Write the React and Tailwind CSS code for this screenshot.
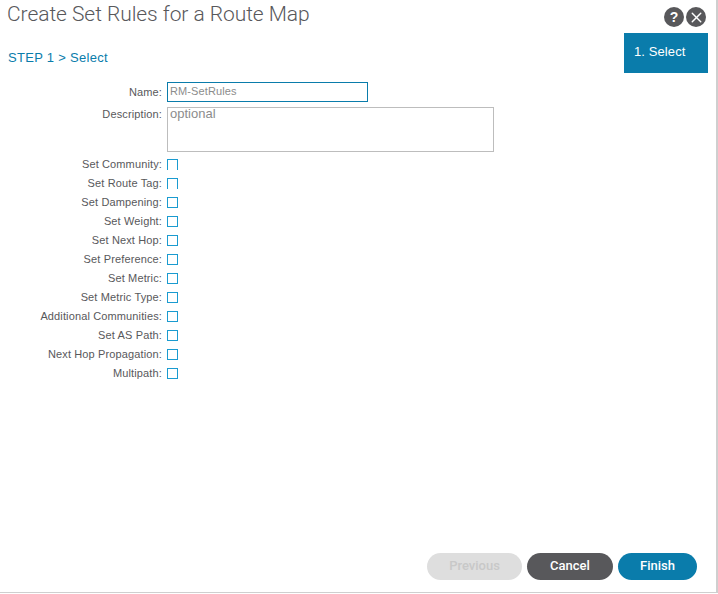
import { X } from "lucide-react";

const checks = [
  { label: "Set Community:", open: true },
  { label: "Set Route Tag:", open: true },
  { label: "Set Dampening:" },
  { label: "Set Weight:" },
  { label: "Set Next Hop:" },
  { label: "Set Preference:" },
  { label: "Set Metric:" },
  { label: "Set Metric Type:" },
  { label: "Additional Communities:" },
  { label: "Set AS Path:" },
  { label: "Next Hop Propagation:" },
  { label: "Multipath:" },
];

function CheckRow({ label, open }) {
  return (
    <div className="flex h-[19px] items-center">
      <span className="w-[162px] text-right text-[11px] tracking-[0.13px] text-[#58585b]">{label}</span>
      <span
        className={
          open
            ? "mt-[-1px] ml-[5px] h-[11px] w-[11px] border border-b-0 border-[#1a9bd0] bg-white"
            : "mt-[-1px] ml-[5px] h-[11px] w-[11px] border border-[#1a9bd0] bg-white"
        }
      />
    </div>
  );
}

export default function App() {
  return (
    <div className="flex h-[594px] w-[718px] flex-col bg-white font-['Liberation_Sans',sans-serif]">
      <div className="flex h-[593px] w-[718px] flex-col border-r-2 border-b border-[#cfcfcf]">
        <div className="flex">
          <div className="flex-1">
            <h1 className="mt-[1px] ml-[7px] font-['Roboto',sans-serif] text-[21px] leading-[26px] font-light tracking-[-0.06px] text-[#58585b]">
              Create Set Rules for a Route Map
            </h1>
            <div className="mt-[22px] ml-[8px] text-[13px] leading-[18px] tracking-[0.3px] text-[#0a7cab]">
              STEP 1 &gt; Select
            </div>
          </div>
          <div className="mr-[8px] flex w-[84px] flex-col items-end">
            <div className="mt-[7px] mr-[2px] flex gap-[2px]">
              <span className="flex h-[20px] w-[20px] items-center justify-center rounded-full bg-[#58585b] text-[14px] font-bold text-white">
                ?
              </span>
              <span className="flex h-[20px] w-[20px] items-center justify-center rounded-full bg-[#58585b] text-white">
                <X size={17} strokeWidth={2} />
              </span>
            </div>
            <div className="mt-[6px] flex h-[40px] w-[84px] items-center bg-[#0a7cab] pb-[2px] pl-[10px] text-[13px] tracking-[0.1px] text-white">
              1. Select
            </div>
          </div>
        </div>

        <div className="mt-[9px] flex h-[20px] items-center">
          <span className="w-[162px] text-right text-[11px] tracking-[0.13px] text-[#58585b]">Name:</span>
          <div className="ml-[5px] flex h-[20px] w-[201px] items-center border border-[#0a7cab] px-[2px] pb-[2px] text-[11px] tracking-[0.1px] text-[#8c8c8c]">
            RM-SetRules
          </div>
        </div>
        <div className="mt-[5px] mb-[3px] flex">
          <span className="w-[162px] pt-[1px] text-right text-[11px] leading-[13px] tracking-[0.13px] text-[#58585b]">Description:</span>
          <div className="ml-[5px] h-[45px] w-[327px] border border-[#bdbdbd] px-[2px] text-[13px] leading-[11px] text-[#8c8c8c]">
            optional
          </div>
        </div>

        {checks.map((c) => (
          <CheckRow key={c.label} label={c.label} open={c.open} />
        ))}

        <div className="mt-auto mb-[12px] flex justify-end gap-[5px] pr-[19px] font-['Roboto',sans-serif] text-[13px] font-medium">
          <button className="h-[27px] w-[95px] rounded-[14px] bg-[#dedede] pb-[2px] text-[#c8c8c8]">Previous</button>
          <button className="h-[27px] w-[86px] rounded-[14px] bg-[#58585b] pb-[2px] text-white">Cancel</button>
          <button className="h-[27px] w-[79px] rounded-[14px] bg-[#0a7cab] pb-[2px] text-white">Finish</button>
        </div>
      </div>
    </div>
  );
}
